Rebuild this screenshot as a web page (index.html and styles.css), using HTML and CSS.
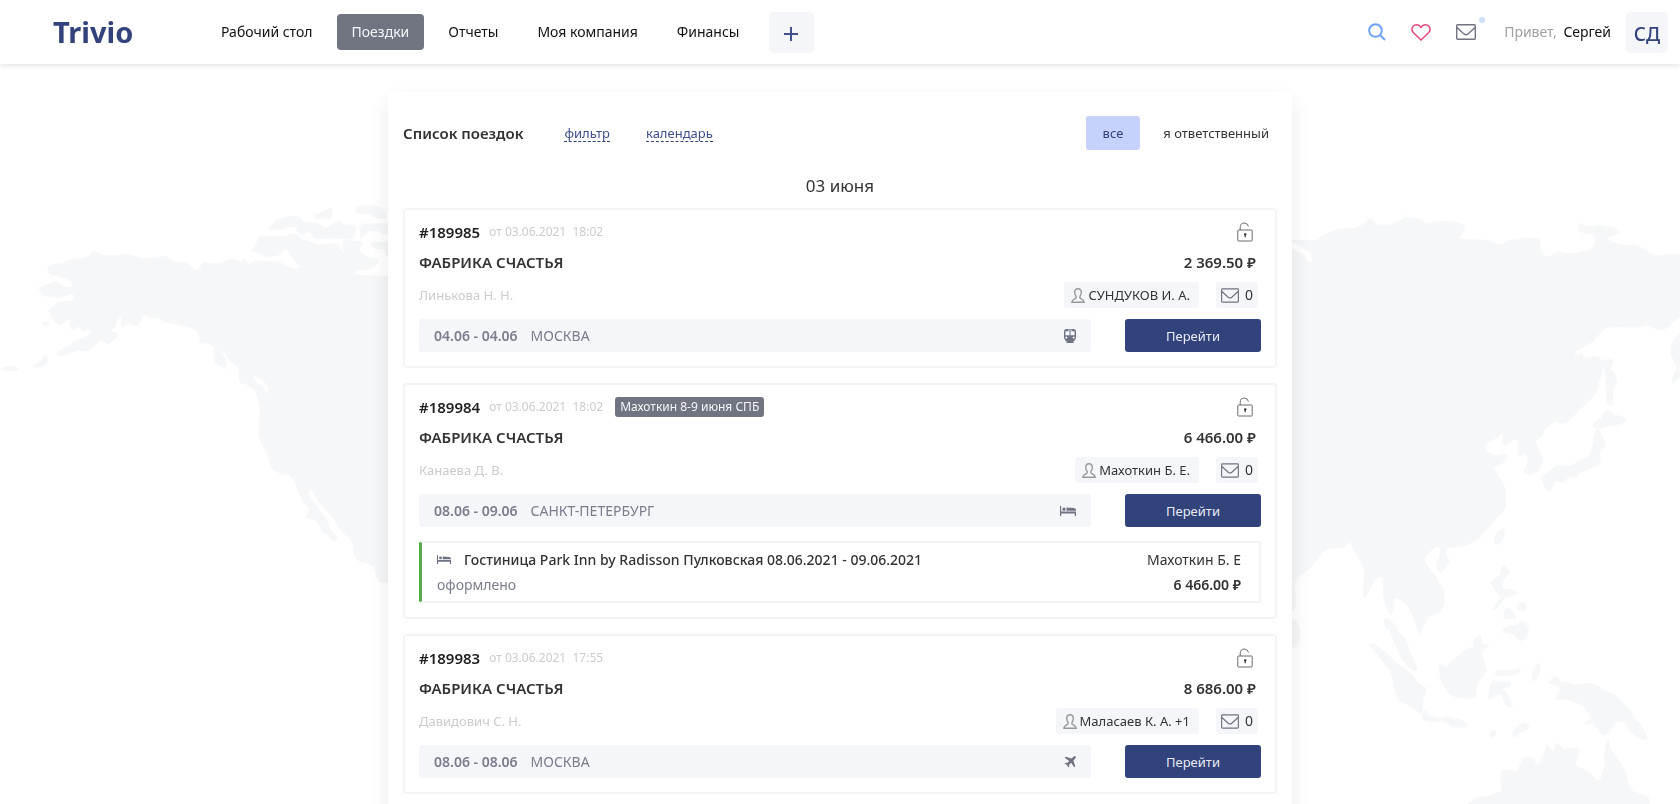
FILE: index.html
```html
<!DOCTYPE html>
<html lang="ru">
<head>
<meta charset="utf-8">
<meta name="viewport" content="width=device-width, initial-scale=1">
<title>Trivio — Поездки</title>
<link rel="stylesheet" href="styles.css">
</head>
<body>
<svg class="map" viewBox="0 0 1680 804" preserveAspectRatio="xMidYMin slice" aria-hidden="true">
  <g transform="translate(0 180) scale(.33333)">
    <path d="M1170 288 Q1110 285 1085 286 Q1062 286 1068 274 Q1074 268 1095 270 Q1130 265 1136 244 Q1134 232 1116 234 Q1080 220 1078 206 Q1092 190 1086 183 L1030 181 Q1022 192 1033 220 Q1022 216 1018 195 Q1010 187 956 194 Q940 192 922 182 Q900 176 890 163 Q875 158 858 168 L790 168 Q775 168 773 178 Q768 200 753 208 Q750 214 778 220 Q785 232 800 230 Q845 230 848 214 Q854 200 864 214 Q880 245 899 258 Q897 268 885 266 Q862 262 840 246 Q820 241 765 241 Q752 244 744 255 Q738 232 732 236 Q722 248 710 240 Q685 233 665 248 Q640 252 612 246 Q602 252 600 262 L584 270 Q568 250 555 247 L530 249 Q518 246 500 228 L430 236 Q390 218 370 224 Q345 228 300 223 Q285 212 277 212 L268 228 Q245 236 220 236 L178 250 Q155 250 144 262 Q140 278 152 286 L170 288 Q185 296 200 297 Q216 305 218 318 Q208 324 190 318 L170 303 Q160 306 148 310 L115 323 Q125 346 138 350 Q180 357 198 348 Q215 340 224 347 Q222 362 208 363 Q175 363 166 373 Q150 384 145 394 L158 414 Q172 440 180 436 Q192 432 204 418 Q210 424 208 438 Q218 454 224 448 L233 438 Q245 454 254 453 Q268 446 273 454 Q270 466 248 474 Q225 480 212 492 L174 514 Q165 522 174 528 Q190 528 212 518 L236 509 Q246 516 258 514 Q278 508 302 478 Q316 496 328 491 Q354 478 354 460 Q352 454 330 455 Q346 448 350 428 Q358 408 366 414 Q360 428 364 440 Q376 436 388 431 Q404 440 414 436 Q424 430 424 414 Q427 402 434 404 L455 416 Q470 410 495 426 L545 437 Q580 443 586 450 Q598 458 600 486 Q608 492 620 490 Q636 496 640 502 L641 540 Q650 560 678 567 L681 540 Q668 522 667 515 Q674 510 682 532 Q688 546 704 553 Q718 566 715 590 Q716 605 724 612 Q738 610 754 624 Q764 626 768 640 L779 680 Q779 720 775 766 Q780 790 802 820 Q808 850 812 862 Q822 876 848 884 Q866 880 872 890 Q886 905 892 926 Q905 966 914 973 Q928 980 927 990 Q918 1004 917 1014 Q938 1014 945 1022 Q966 1046 966 1056 Q984 1064 994 1080 Q1006 1090 1014 1076 Q1012 1068 1004 1062 Q985 1040 984 1025 Q960 990 944 968 Q922 948 926 938 Q932 926 938 932 Q944 950 954 964 Q990 998 1026 1056 Q1056 1078 1060 1100 Q1056 1130 1078 1145 Q1120 1152 1124 1168 Q1130 1208 1146 1209 L1170 1209Z"/>
    <path d="M806 146 Q808 136 823 130 Q820 122 832 118 Q870 104 897 108 Q903 118 912 124 L942 128 Q965 130 972 142 Q984 146 992 136 Q1004 122 1022 124 Q1030 136 1040 136 Q1052 128 1068 138 Q1068 176 1050 179 Q1000 172 945 178 Q936 170 930 156 Q920 160 902 166 Q892 158 886 142 Q872 138 850 148 Q820 152 806 146Z M942 112 Q944 104 960 98 Q990 80 999 86 Q1000 106 992 118 Q978 118 966 114 Q950 120 942 112Z M1066 92 Q1064 76 1096 76 Q1136 74 1150 88 Q1160 104 1156 118 Q1138 116 1118 110 Q1114 98 1104 102 Q1070 106 1066 92Z M1080 174 L1080 142 Q1082 131 1098 130 L1170 130 L1170 164 Q1144 166 1138 154 L1104 154 Q1096 170 1080 174Z M1112 190 Q1120 182 1140 186 L1170 182 L1170 238 Q1156 226 1150 206 Q1118 214 1112 190Z"/>
    <path d="M122 430 Q134 420 150 426 Q148 438 140 440 Q132 438 122 430Z M97 558 Q118 548 124 540 Q130 522 138 522 Q146 534 142 546 Q134 562 122 562 Q106 564 97 558Z M5 565 Q16 558 40 558 L58 566 Q40 576 20 573Z"/>
    <path class="sea" d="M758 584 Q798 604 806 626 Q808 638 799 642 Q792 622 784 617 Q764 610 758 584Z"/>
  </g>
  <g transform="translate(1280 180) scale(.33333)">
    <path d="M30 180 L110 180 Q160 140 205 144 Q235 150 262 120 Q276 106 284 130 Q330 145 372 113 Q378 96 380 113 Q418 110 440 130 Q475 119 520 125 Q556 128 556 142 L538 174 Q545 178 560 177 L625 180 Q640 184 650 192 Q668 196 688 181 Q735 170 775 175 Q784 182 782 212 Q798 234 810 230 Q818 224 832 214 Q842 210 848 219 L895 218 Q915 212 930 210 Q946 198 946 170 Q942 163 925 163 L896 156 Q892 140 902 130 Q912 128 916 138 L946 138 Q960 130 978 139 Q1012 140 1014 150 L1022 156 Q1005 168 978 174 Q1010 194 1030 194 L1070 194 Q1085 200 1112 222 Q1120 228 1130 226 L1200 222 L1200 412 Q1175 430 1162 444 Q1140 456 1118 442 Q1105 432 1090 438 Q1070 445 1040 442 L986 442 Q968 450 942 482 Q928 494 900 506 Q882 516 884 522 Q892 528 906 517 Q910 530 914 535 Q928 534 942 528 Q958 528 966 541 Q985 536 998 538 Q1004 550 992 566 Q1012 582 1011 610 Q998 625 999 632 L999 674 Q990 678 980 668 Q976 660 976 580 Q970 550 968 564 Q966 590 956 610 Q954 635 938 654 Q920 672 902 686 L866 724 Q856 734 838 730 Q828 720 822 726 Q806 740 794 750 Q788 770 780 774 L766 784 Q776 812 788 824 Q794 848 776 872 Q758 888 742 882 Q730 878 732 870 Q744 850 742 834 Q736 814 728 822 Q720 832 712 826 Q716 784 710 778 Q692 782 678 796 Q666 800 666 784 Q674 754 668 758 Q648 775 632 785 Q612 795 613 802 Q625 822 640 824 Q664 824 670 820 Q684 825 681 836 Q668 854 640 864 Q672 905 678 935 L676 958 Q684 982 670 996 Q635 1030 612 1058 Q598 1080 570 1092 Q535 1104 508 1102 Q496 1108 499 1130 L510 1142 Q500 1160 492 1172 Q482 1184 474 1174 Q464 1160 472 1144 Q482 1120 480 1104 Q472 1096 460 1106 Q434 1130 433 1140 Q436 1152 448 1164 Q475 1196 476 1208 Q498 1226 494 1244 Q494 1280 484 1292 Q474 1304 450 1308 Q436 1325 418 1365 Q408 1340 398 1308 Q382 1268 350 1254 Q344 1250 344 1272 L334 1308 Q318 1290 310 1250 L308 1192 Q290 1186 276 1215 Q268 1240 252 1254 Q246 1252 252 1190 Q254 1165 244 1148 Q222 1118 210 1086 Q190 1104 182 1105 L150 1105 Q138 1106 126 1122 Q105 1145 90 1166 Q50 1190 44 1210 Q48 1245 48 1280 Q44 1295 30 1296Z"/>
    <path d="M1200 460 Q1160 490 1176 532 Q1190 556 1188 566 Q1174 605 1174 618 Q1180 608 1200 590Z M938 736 Q942 722 964 715 Q972 690 984 688 Q996 694 1000 704 Q1034 704 1042 722 Q1032 734 990 738 Q960 748 948 744 Q940 742 938 736Z M956 746 Q966 762 978 794 Q976 804 962 810 L962 846 Q940 864 900 880 Q885 902 866 890 Q852 910 840 908 Q826 898 824 908 Q820 930 808 932 Q792 932 782 890 Q800 882 830 854 L874 858 Q890 842 920 832 Q936 820 942 764 Q948 744 956 746Z M642 1090 Q642 1050 674 1044 Q676 1068 662 1088 Q650 1100 642 1090Z"/>
    <path class="sea" d="M30 186 L46 190 Q60 204 80 210 Q98 222 96 242 Q90 252 78 240 Q78 225 66 220 L30 206Z"/>
  </g>
  <g transform="translate(1280 500) scale(.33333)">
    <path d="M36 360 Q48 352 58 380 Q66 400 58 424 Q50 442 36 444Z M312 356 Q322 346 350 380 Q350 394 366 404 Q382 420 390 454 Q412 500 412 510 Q404 518 394 508 Q362 484 352 448 Q332 404 330 390 Q308 382 312 356Z M266 434 Q278 424 290 436 Q320 458 346 484 Q385 512 400 528 Q412 552 438 562 Q442 580 430 592 L428 632 Q424 644 416 640 Q400 618 352 600 Q340 560 336 530 Q330 510 316 496 Q282 450 266 434Z M424 640 Q440 620 446 646 L484 654 Q500 642 520 656 Q556 654 564 680 Q540 684 516 682 Q500 666 486 664 Q440 672 428 658Z M476 494 Q486 490 502 502 Q510 480 535 468 Q552 442 582 440 Q574 414 600 404 Q610 416 606 432 L628 436 L606 460 Q612 490 622 508 Q612 530 592 550 L588 594 Q560 600 520 590 Q476 560 476 494Z M664 196 Q678 194 690 218 Q680 232 668 242 Q666 260 670 266 Q700 266 711 276 Q704 290 678 290 Q656 326 638 334 Q632 328 664 292 Q640 270 632 246 Q650 230 662 222Z M709 322 Q714 304 732 306 Q744 318 734 332 Q720 340 709 322Z M670 350 Q672 324 686 324 Q700 330 710 356 L672 356Z M666 398 Q672 372 700 376 Q712 376 726 360 Q732 368 746 382 Q746 414 724 424 Q708 420 702 404Z M644 518 Q648 508 664 512 Q700 510 722 504 Q722 522 708 522 Q670 532 650 528Z M624 596 Q630 550 638 541 Q655 546 690 545 Q704 562 668 564 Q690 580 698 622 Q676 630 664 584 Q650 580 640 592 Q630 602 624 596Z M756 540 Q756 498 778 488 Q792 500 770 540 Q762 546 756 540Z M628 700 Q640 680 650 700 Q642 718 630 708Z M697 706 Q700 680 728 668 Q746 668 748 684 Q738 694 720 700 Q704 720 697 706Z M802 548 L824 528 Q840 532 840 544 Q870 546 880 554 Q920 544 952 554 Q975 575 1004 582 Q1030 610 1052 630 Q1056 652 1080 670 Q1096 690 1102 716 Q1090 728 1050 696 L1034 664 Q1006 656 994 690 Q976 716 962 700 Q950 688 942 672 L912 674 Q918 660 934 656 Q916 612 880 608 Q870 606 862 598 L826 600 Q832 578 842 564Z M562 912 Q590 886 622 890 Q642 876 664 876 Q658 830 664 812 Q680 804 712 814 Q724 774 742 770 Q756 768 770 792 Q780 796 784 772 Q800 755 800 730 Q808 738 814 752 Q824 758 826 732 Q836 726 850 748 Q880 740 896 744 Q904 754 886 792 Q888 800 905 804 Q935 818 952 842 Q962 844 964 828 Q978 794 972 770 Q974 732 984 716 Q990 724 990 744 Q1030 800 1040 820 Q1040 856 1060 874 Q1100 888 1106 892 L1112 912Z"/>
  </g>
</svg>

<svg class="defs" aria-hidden="true">
  <symbol id="mail" viewBox="0 0 20 16"><path d="M1.700 .7H18.300Q19.300 .7 19.300 1.700V14.300Q19.300 15.300 18.300 15.300H1.700Q.7 15.300 .7 14.300V1.700Q.7 .7 1.700 .7ZM1 3.500L8 9.900Q10 11.500 12 9.900L19 3.500"/></symbol>
  <symbol id="lock" viewBox="0 0 16 20"><path d="M1.600 8H14.400Q15.200 8 15.200 8.800V18.200Q15.200 19 14.400 19H1.600Q.8 19 .8 18.200V8.800Q.8 8 1.600 8ZM3.200 8V5.500Q3.200 1 7.300 1Q10.500 1 11.500 4.500"/><path class="solid" d="M6.900 12.600A1.300 1.300 0 0 1 9.500 12.600L8.800 13.500V15.300H7.600V13.500Z"/></symbol>
  <symbol id="person" viewBox="0 0 14 15"><path d="M7 .8C9.500 .8 10.500 2.600 10.300 4.800C10.100 6.800 9.300 7.900 8.900 8.500V9.800C9.400 11 13 11 13.200 14.200H.8C1 11 4.600 11 5.100 9.800V8.500C4.700 7.900 3.900 6.800 3.700 4.800C3.500 2.600 4.500 .8 7 .8Z"/></symbol>
  <symbol id="train" viewBox="0 0 12 14"><path fill-rule="evenodd" d="M2.500 0H9.500Q12 0 12 2.500V8.500Q12 10.500 10.300 11L11 12H9.500V14H2.500V12H1L1.700 11Q0 10.500 0 8.500V2.500Q0 0 2.500 0ZM1.400 2.800V6.200H5.500V2.300H1.800ZM6.500 2.300V6.200H10.600V2.800L10.200 2.300ZM2.300 7.600A1 1 0 1 0 2.310 7.600ZM9.700 7.600A1 1 0 1 0 9.710 7.600ZM4 .8V1.400H8V.8Z"/></symbol>
  <symbol id="bed" viewBox="0 0 16 10"><path d="M0 0H1.200V5.500H16V10H14.800V7.500H1.200V10H0Z"/><path d="M6.500 1.500L14 2Q16 2.300 16 4V4.800H6.500Z"/><circle cx="4" cy="3.200" r="1.600"/></symbol>
  <symbol id="plane" viewBox="0 0 12 12"><path d="M11.600 .4C11 -.2 10 .2 9.300 .9L7.600 2.600L1.700 .8L.7 1.800L5.200 4.900L3.300 7L1.500 6.700L.6 7.600L3 9L4.400 11.400L5.300 10.500L5 8.700L7.100 6.800L10.200 11.300L11.200 10.300L9.400 4.400L11.100 2.700C11.800 2 12.200 1 11.600 .4Z"/></symbol>
</svg>

<header class="topbar">
  <a class="logo" href="#">Trivio</a>
  <nav class="nav" aria-label="Главное меню">
    <a class="nav-link" href="#">Рабочий стол</a>
    <a class="nav-link active" href="#">Поездки</a>
    <a class="nav-link" href="#">Отчеты</a>
    <a class="nav-link" href="#">Моя компания</a>
    <a class="nav-link" href="#">Финансы</a>
  </nav>
  <button class="square create" type="button" aria-label="Создать"><svg class="plus" viewBox="0 0 14 14"><path d="M7 0V14M0 7H14"/></svg></button>
  <div class="tools">
    <button class="tool search" type="button" aria-label="Поиск"><svg viewBox="0 0 18 18"><circle cx="7.500" cy="7.500" r="6.300"/><path d="M12 12L17 17"/></svg></button>
    <button class="tool heart" type="button" aria-label="Избранное"><svg viewBox="0 0 20 17"><path d="M10 3.300C8 0 3.700 .2 2 2.400C.5 4.500 .8 7 2.500 8.800L10 16L17.500 8.800C19.200 7 19.500 4.500 18 2.400C16.300 .2 12 0 10 3.300Z"/></svg></button>
    <button class="tool inbox" type="button" aria-label="Сообщения"><svg viewBox="0 0 20 16"><use href="#mail"/></svg><span class="dot"></span></button>
  </div>
  <p class="hello">Привет, <span>Сергей</span></p>
  <button class="square avatar" type="button">СД</button>
</header>

<main class="panel">
  <div class="heading">
    <h1>Список поездок</h1>
    <a class="toggle" href="#">фильтр</a>
    <a class="toggle" href="#">календарь</a>
    <div class="scope">
      <button class="scope-btn chosen" type="button">все</button>
      <button class="scope-btn" type="button">я ответственный</button>
    </div>
  </div>
  <h2 class="day">03 июня</h2>

  <article class="trip">
    <div class="row top"><b class="num">#189985</b><span class="made">от 03.06.2021 &nbsp;18:02</span><svg class="lock"><use href="#lock"/></svg></div>
    <div class="row strong"><span>ФАБРИКА СЧАСТЬЯ</span><span class="price">2 369.50 ₽</span></div>
    <div class="row people"><span class="author">Линькова Н. Н.</span><span class="chip"><svg class="person"><use href="#person"/></svg>СУНДУКОВ И. А.</span><span class="chip mails"><svg class="mail"><use href="#mail"/></svg>0</span></div>
    <div class="row route"><div class="bar"><b>04.06 - 04.06</b><span>МОСКВА</span><svg class="train"><use href="#train"/></svg></div><button class="go" type="button">Перейти</button></div>
  </article>

  <article class="trip">
    <div class="row top"><b class="num">#189984</b><span class="made">от 03.06.2021 &nbsp;18:02</span><span class="tag">Махоткин 8-9 июня СПБ</span><svg class="lock"><use href="#lock"/></svg></div>
    <div class="row strong"><span>ФАБРИКА СЧАСТЬЯ</span><span class="price">6 466.00 ₽</span></div>
    <div class="row people"><span class="author">Канаева Д. В.</span><span class="chip"><svg class="person"><use href="#person"/></svg>Махоткин Б. Е.</span><span class="chip mails"><svg class="mail"><use href="#mail"/></svg>0</span></div>
    <div class="row route"><div class="bar"><b>08.06 - 09.06</b><span>САНКТ-ПЕТЕРБУРГ</span><svg class="bed"><use href="#bed"/></svg></div><button class="go" type="button">Перейти</button></div>
    <section class="service">
      <div class="line"><svg class="bed small"><use href="#bed"/></svg><b class="hotel">Гостиница Park Inn by Radisson Пулковская 08.06.2021 - 09.06.2021</b><span class="end">Махоткин Б. Е</span></div>
      <div class="line"><span class="status">оформлено</span><b class="end">6 466.00 ₽</b></div>
    </section>
  </article>

  <article class="trip">
    <div class="row top"><b class="num">#189983</b><span class="made">от 03.06.2021 &nbsp;17:55</span><svg class="lock"><use href="#lock"/></svg></div>
    <div class="row strong"><span>ФАБРИКА СЧАСТЬЯ</span><span class="price">8 686.00 ₽</span></div>
    <div class="row people"><span class="author">Давидович С. Н.</span><span class="chip"><svg class="person"><use href="#person"/></svg>Маласаев К. А. +1</span><span class="chip mails"><svg class="mail"><use href="#mail"/></svg>0</span></div>
    <div class="row route"><div class="bar"><b>08.06 - 08.06</b><span>МОСКВА</span><svg class="plane"><use href="#plane"/></svg></div><button class="go" type="button">Перейти</button></div>
  </article>
</main>
</body>
</html>
```

FILE: styles.css
```css
* { box-sizing: border-box; }

body {
  margin: 0;
  min-height: 100vh;
  display: flex;
  flex-direction: column;
  background: #fff;
  color: #333;
  font: 14px/20px "Noto Sans", "Open Sans", sans-serif;
}

h1, h2, p { margin: 0; }
b { font-weight: 600; }
a { color: inherit; text-decoration: none; }
button { font: inherit; color: inherit; border: 0; padding: 0; background: none; cursor: pointer; }
svg { flex: none; fill: none; }

.defs { position: absolute; width: 0; height: 0; }

.map {
  position: fixed;
  inset: 0;
  z-index: -1;
  width: 100%;
  height: 100%;
  fill: #f5f7f9;
}
.sea { fill: #fff; }

/* Top bar */
.topbar {
  display: flex;
  align-items: center;
  height: 64px;
  padding: 0 12px 0 53px;
  background: #fff;
  box-shadow: 0 1px 6px rgba(0, 0, 0, .14);
}
.logo {
  width: 153px;
  color: #32427b;
  font-size: 29px;
  line-height: 40px;
  font-weight: 700;
}
.nav { display: flex; gap: 9px; }
.nav-link {
  padding: 8px 15px;
  border-radius: 4px;
  color: #111;
  white-space: nowrap;
}
.nav-link.active { background: #717581; color: #f4f5f9; }

.square {
  display: grid;
  place-items: center;
  width: 45px;
  height: 41px;
  padding-top: 3px;
  border-radius: 5px;
  background: #f4f6fa;
}
.create { margin-left: 14px; }
.plus { width: 14px; height: 14px; stroke: #42518a; stroke-width: 2; }
.avatar {
  width: 42px;
  margin-left: 15px;
  color: #32427b;
  font-size: 19px;
  font-weight: 500;
}

.tools { display: flex; gap: 25px; margin-left: auto; }
.tool { position: relative; display: grid; place-items: center; height: 20px; }
.tool svg { height: 18px; width: 18px; stroke-width: 2; }
.search svg { stroke: #6fa3f8; }
.heart svg { width: 20px; height: 17px; stroke: #e8467c; stroke-width: 1.500; }
.inbox svg { width: 20px; height: 16px; stroke: #6f7382; stroke-width: 1.400; }
.dot {
  position: absolute;
  top: -5px;
  right: -9px;
  width: 6px;
  height: 6px;
  border-radius: 50%;
  background: #cfe0fd;
}
.hello { margin-left: 28px; color: #a0a0a0; }
.hello span { margin-left: 3px; color: #111; }

/* Trip list */
.panel {
  flex: 1;
  width: 904px;
  max-width: 100%;
  margin: 28px auto 0;
  padding: 24px 15px 0;
  background: #fff;
  box-shadow: 0 10px 20px rgba(0, 0, 0, .09);
}
.heading { display: flex; align-items: center; height: 34px; }
.heading h1 { margin-right: 41px; font-size: 15px; line-height: 20px; font-weight: 600; }
.toggle {
  margin-right: 36px;
  border-bottom: 1px dashed #32427b;
  color: #3f4f8c;
  font-size: 13px;
  line-height: 16px;
}
.scope { display: flex; gap: 8px; margin-left: auto; }
.scope-btn { padding: 7px 15px; border-radius: 3px; font-size: 13px; }
.scope-btn:last-child { padding-right: 8px; }
.scope-btn.chosen { padding: 7px 17px; background: #c7d2fc; color: #32427b; }
.day {
  padding: 23px 0 9px;
  font-size: 17px;
  line-height: 26px;
  font-weight: 400;
  text-align: center;
}

.trip {
  margin-bottom: 15px;
  padding: 7px 14px 14px;
  border: 2px solid #f3f4f5;
  border-radius: 4px;
}
.trip:last-child { margin-bottom: 0; }
.row { display: flex; align-items: center; height: 30px; }
.num { font-size: 15px; color: #222; }
.made { margin-left: 9px; color: #ccc; font-size: 12px; }
.tag {
  margin-left: 12px;
  padding: 0 5px;
  border-radius: 3px;
  background: #717581;
  color: #f4f5f9;
  font-size: 12px;
}
.lock { width: 16px; height: 20px; margin: 0 8px 0 auto; stroke: #6a6a6a; }
.solid { fill: #333; stroke: none; }
.strong { font-size: 15px; font-weight: 600; }
.price { margin: 0 5px 0 auto; }
.people { height: 36px; font-size: 13px; }
.author { margin-right: auto; color: #ccc; }
.chip {
  display: flex;
  align-items: center;
  gap: 3px;
  height: 26px;
  padding: 0 9px 0 7px;
  border-radius: 3px;
  background: #f4f6fa;
}
.mails { gap: 6px; margin: 0 3px 0 17px; padding: 0 5px; font-size: 14px; }
.person { width: 14px; height: 15px; stroke: #999; stroke-width: 1.400; }
.mail { width: 18px; height: 15px; stroke: #6f7382; stroke-width: 1.300; }

.route { gap: 34px; height: 33px; margin-top: 6px; }
.bar {
  display: flex;
  flex: 1;
  align-items: center;
  gap: 13px;
  height: 33px;
  padding: 0 15px;
  border-radius: 3px;
  background: #f4f6fa;
  color: #7a7d8c;
}
.bar svg { margin-left: auto; fill: #6f7382; }
.train { width: 12px; height: 14px; }
.bed { width: 16px; height: 10px; fill: #6f7382; }
.plane { width: 12px; height: 12px; }
.go {
  width: 136px;
  height: 33px;
  border-radius: 3px;
  background: #32427b;
  color: #e8ebf5;
  font-size: 13px;
}

.service {
  margin-top: 14px;
  padding: 4px 18px 4px 15px;
  border: 2px solid #f3f4f5;
  border-left: 3px solid #55ab4a;
  border-radius: 3px;
}
.line { display: flex; align-items: center; height: 25px; }
.small { width: 14px; height: 9px; margin-right: 13px; }
.hotel { font-weight: 500; }
.status { color: #7a7d8c; }
.end { margin-left: auto; }
```
